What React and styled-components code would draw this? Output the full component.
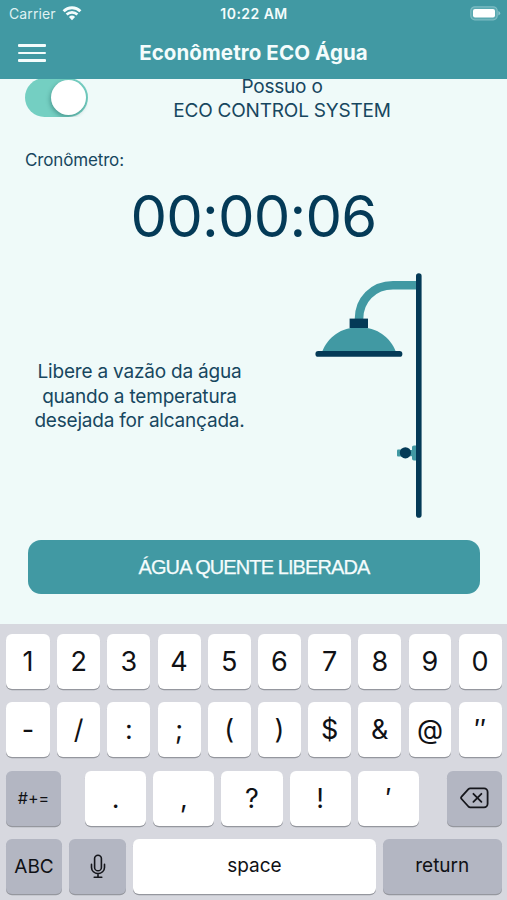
import React, { useState } from "react";
import styled, { createGlobalStyle } from "styled-components";

const numberKeys = ["1", "2", "3", "4", "5", "6", "7", "8", "9", "0"];
const symbolKeys = ["-", "/", ":", ";", "(", ")", "$", "&", "@", "″"];
const punctuationKeys = [".", ",", "?", "!", "′"];

const WifiIcon = () => (
  <svg width="20" height="15" viewBox="0 0 20 15" fill="none" stroke="#f4fcfc">
    <path d="M1.6 5.2a12 12 0 0 1 16.8 0" strokeWidth="2.9" />
    <path d="M4.6 8.5a7.8 7.8 0 0 1 10.8 0" strokeWidth="2.6" />
    <path d="M10 14.2l-3.1-3.2a4.6 4.6 0 0 1 6.2 0z" fill="#f4fcfc" stroke="none" />
  </svg>
);

const BatteryIcon = () => (
  <svg width="31" height="15" viewBox="0 0 31 15">
    <rect x="0.8" y="0.8" width="26.4" height="13" rx="4" fill="#5aa9b1" stroke="#7dbcc3" strokeWidth="1.2" />
    <rect x="3" y="3" width="22" height="8.6" rx="2" fill="#fff" />
    <path d="M28.4 5v4.6q1.8-.8 1.8-2.3T28.4 5z" fill="#8fc6cb" />
  </svg>
);

const ShowerDrawing = () => (
  <svg width="108" height="246" viewBox="0 0 108 246">
    <path d="M44 47C44 28 58 13.3 78 13.3H104" fill="none" stroke="#4199a3" strokeWidth="8.6" />
    <path d="M7 80C13 65 26 55.3 44 55.3S75 65 81 80z" fill="#4199a3" />
    <rect x="34.6" y="46.6" width="18.4" height="9.4" fill="#043a57" />
    <rect x="0.4" y="79" width="87" height="5.8" rx="2.9" fill="#043a57" />
    <rect x="82" y="177.5" width="9" height="7" rx="1" fill="#4199a3" />
    <path d="M94.6 178h2.4v-3q0-1.6 2-1.6h4v15h-4q-2 0-2-1.6v-2.6h-2.4z" fill="#4199a3" />
    <circle cx="90.4" cy="180.8" r="5.6" fill="#043a57" />
    <rect x="101" y="1.3" width="5.6" height="244.4" rx="2.8" fill="#043a57" />
  </svg>
);

const MicIcon = () => (
  <svg width="16" height="25" viewBox="0 0 16 25" fill="none" stroke="#15161b" strokeWidth="1.6" strokeLinecap="round">
    <rect x="4.6" y="1.2" width="6.8" height="15.6" rx="3.4" />
    <path d="M1.5 10.4v3a6.5 6.2 0 0 0 13 0v-3M8 19.8V23M4.2 23.2h7.6" />
  </svg>
);

const DeleteIcon = () => (
  <svg width="29" height="22" viewBox="0 0 29 22" fill="none" stroke="#15161b" strokeWidth="1.8" strokeLinecap="round" strokeLinejoin="round">
    <path d="M10.2 1.3H24a3.6 3.6 0 0 1 3.6 3.6v11.8a3.6 3.6 0 0 1-3.6 3.6H10.2q-1 0-1.8-.8L1.6 12q-1.1-1.2 0-2.4l6.8-7.5q.8-.8 1.8-.8z" />
    <path d="M13.4 6.8l8 8M21.4 6.8l-8 8" />
  </svg>
);

const App = () => {
  const [hasSystem, setHasSystem] = useState(true);

  return (
    <Screen>
      <GlobalStyle />
      <Header>
        <StatusBar>
          <Carrier>
            Carrier <WifiIcon />
          </Carrier>
          <Time>10:22 AM</Time>
          <Battery>
            <BatteryIcon />
          </Battery>
        </StatusBar>
        <NavBar>
          <MenuButton type="button" aria-label="Menu">
            <span />
            <span />
            <span />
          </MenuButton>
          <Title>Econômetro ECO Água</Title>
        </NavBar>
      </Header>
      <Content>
        <SystemRow>
          <Switch
            type="button"
            role="switch"
            aria-checked={hasSystem}
            $on={hasSystem}
            onClick={() => setHasSystem(!hasSystem)}
          >
            <Knob />
          </Switch>
          <SystemLabel>
            <span>Possuo o</span>
            <span>ECO CONTROL SYSTEM</span>
          </SystemLabel>
        </SystemRow>
        <TimerLabel>Cronômetro:</TimerLabel>
        <Timer>00:00:06</Timer>
        <ShowerRow>
          <Hint>
            Libere a vazão da água
            <br />
            quando a temperatura
            <br />
            desejada for alcançada.
          </Hint>
          <ShowerDrawing />
        </ShowerRow>
        <ReleaseButton type="button">ÁGUA QUENTE LIBERADA</ReleaseButton>
      </Content>
      <Keyboard>
        <KeyRow>
          {numberKeys.map((k, index) => (
            <Key key={k} $width={index === 0 ? "44px" : null}>{k}</Key>
          ))}
        </KeyRow>
        <KeyRow>
          {symbolKeys.map((k, index) => (
            <Key key={k} $width={index === 0 ? "44px" : null}>{k}</Key>
          ))}
        </KeyRow>
        <KeyRow>
          <Key $dark $width="55px" $size="16px">#+=</Key>
          <PunctuationKeys>
            {punctuationKeys.map((k) => (
              <Key key={k}>{k}</Key>
            ))}
          </PunctuationKeys>
          <Key $dark $width="54.5px" aria-label="delete">
            <DeleteIcon />
          </Key>
        </KeyRow>
        <KeyRow>
          <Key $dark $width="56px" $size="19px">ABC</Key>
          <Key $dark $width="56.5px" aria-label="dictation">
            <MicIcon />
          </Key>
          <Key $size="19px" $raise="3px">space</Key>
          <Key $dark $width="118.5px" $size="19px" $raise="3px">return</Key>
        </KeyRow>
      </Keyboard>
    </Screen>
  );
};

const GlobalStyle = createGlobalStyle`
  * {
    box-sizing: border-box;
  }
  body {
    margin: 0;
    background: #effaf9;
  }
  button {
    font-family: inherit;
    border: none;
    padding: 0;
    cursor: pointer;
  }
  svg {
    display: block;
    flex-shrink: 0;
  }
`;

const Screen = styled.div`
  display: flex;
  flex-direction: column;
  width: 507px;
  height: 900px;
  overflow: hidden;
  background: #effaf9;
  color: #17475f;
  font-family: Inter, "Liberation Sans", sans-serif;
`;

/* header */
const Header = styled.header`
  height: 79px;
  flex-shrink: 0;
  background: #4199a3;
  color: #f4fcfc;
`;

const StatusBar = styled.div`
  display: grid;
  grid-template-columns: 1fr auto 1fr;
  align-items: center;
  height: 27px;
  padding: 0 6px 0 9px;
`;

const Carrier = styled.div`
  display: flex;
  align-items: center;
  gap: 6px;
  font-size: 14px;
  letter-spacing: 0.1px;
  color: #dff1f2;
`;

const Time = styled.div`
  margin-right: 2px;
  font-size: 14px;
  font-weight: 600;
  letter-spacing: 0.45px;
`;

const Battery = styled.div`
  display: flex;
  justify-content: flex-end;
`;

const NavBar = styled.div`
  display: grid;
  grid-template-columns: 46px 1fr 46px;
  align-items: center;
  height: 51px;
`;

const MenuButton = styled.button`
  display: flex;
  flex-direction: column;
  gap: 5px;
  width: 28px;
  margin: 1px 0 0 18px;
  background: none;

  span {
    height: 2.5px;
    border-radius: 1px;
    background: #f4fcfc;
  }
`;

const Title = styled.h1`
  margin: 0;
  text-align: center;
  font-size: 20.5px;
  font-weight: 700;
  letter-spacing: 0.1px;
`;

/* content */
const Content = styled.main`
  display: flex;
  flex-direction: column;
  height: 545px;
  flex-shrink: 0;
`;

const SystemRow = styled.div`
  display: flex;
  height: 44px;
  padding-left: 25px;
`;

const Switch = styled.button`
  display: flex;
  justify-content: ${(props) => (props.$on ? "flex-end" : "flex-start")};
  align-items: center;
  width: 63px;
  height: 39px;
  margin-top: -1px;
  padding: 2px;
  border-radius: 20px;
  background: ${(props) => (props.$on ? "#74cfc2" : "#d5dcdc")};
  clip-path: inset(1px 0 0 0);
`;

const Knob = styled.span`
  width: 35px;
  height: 35px;
  border-radius: 50%;
  background: #fff;
  box-shadow: -1px 2px 4px rgba(0, 60, 60, 0.35);
`;

const SystemLabel = styled.div`
  display: flex;
  flex-direction: column;
  align-items: center;
  width: 388px;
  margin-top: -4px;
  font-size: 19px;
  line-height: 24px;
  letter-spacing: -0.2px;
  clip-path: inset(4px 0 -10px 0);
`;

const TimerLabel = styled.div`
  height: 54px;
  padding: 25px 0 0 25px;
  font-size: 17px;
  line-height: 24px;
  letter-spacing: -0.15px;
`;

const Timer = styled.div`
  height: 76px;
  padding-top: 9px;
  text-align: center;
  color: #043a57;
  font-size: 58px;
  line-height: 60px;
  letter-spacing: -0.8px;
`;

const ShowerRow = styled.div`
  display: flex;
  align-items: center;
  gap: 35px;
  height: 287px;
  padding-bottom: 4px;
`;

const Hint = styled.p`
  width: 279px;
  margin: 5px 1px 0 0;
  text-align: center;
  font-size: 19px;
  line-height: 24.5px;
  letter-spacing: -0.2px;
`;

const ReleaseButton = styled.button`
  width: 452px;
  height: 54px;
  margin-left: 28px;
  border-radius: 13px;
  background: #4199a3;
  color: #f4fcfc;
  font-family: "Liberation Sans", Arial, sans-serif;
  font-size: 20px;
  letter-spacing: -0.9px;
  -webkit-text-stroke: 0.25px #f4fcfc;
`;

/* keyboard */
const Keyboard = styled.div`
  display: flex;
  flex-direction: column;
  gap: 13.5px;
  flex: 1;
  padding: 9.5px 5.5px 0 6px;
  background: #d7d8df;
`;

const KeyRow = styled.div`
  display: flex;
  justify-content: space-between;
  gap: 7.3px;
  height: 55px;
`;

const PunctuationKeys = styled.div`
  display: flex;
  gap: 7px;
  width: 334px;
  margin-right: 4px;
`;

const Key = styled.button`
  display: flex;
  align-items: center;
  justify-content: center;
  flex: ${(props) => (props.$width ? `0 0 ${props.$width}` : "1 1 0")};
  min-width: 0;
  padding-bottom: ${(props) => props.$raise || "0"};
  border-radius: 6px;
  background: ${(props) => (props.$dark ? "#b3b6c2" : "#fff")};
  box-shadow: 0 1.3px 0 #95979e;
  color: #101115;
  font-size: ${(props) => props.$size || "27px"};
`;

export default App;
